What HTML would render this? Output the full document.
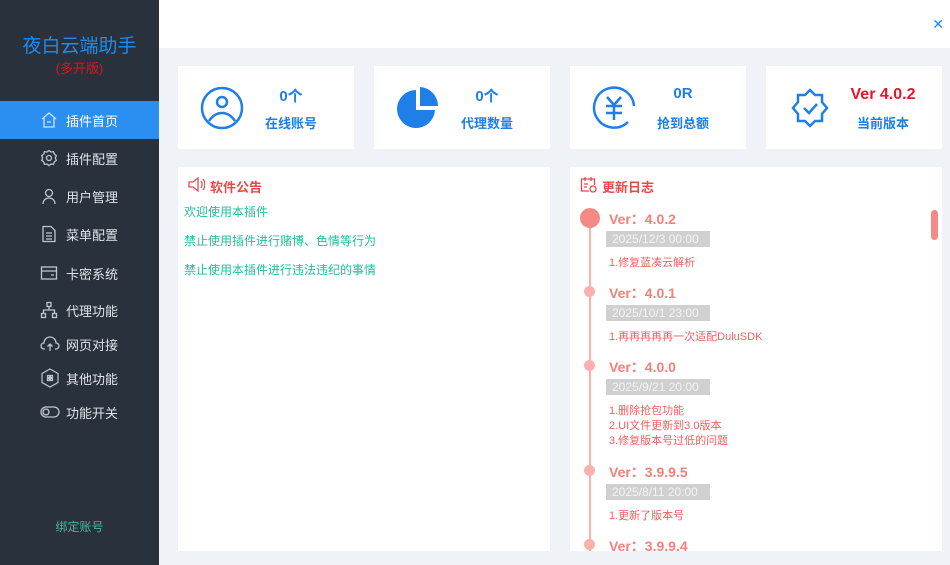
<!DOCTYPE html>
<html><head><meta charset="utf-8"><style>
*{margin:0;padding:0;box-sizing:border-box}
body{width:950px;height:565px;overflow:hidden;background:#eff2f7;font-family:"Liberation Sans","Noto Sans CJK SC",sans-serif;position:relative}
.side{position:absolute;left:0;top:0;width:159px;height:565px;background:#29313c}
.title{position:absolute;top:31px;width:159px;text-align:center;color:#1e8cf0;font-size:19px}
.sub{position:absolute;top:58px;width:159px;text-align:center;color:#e0141e;font-size:13px}
.item{position:absolute;left:0;width:159px;height:38px;display:flex;align-items:center;color:#dfe3e8;font-size:13px}
.item svg{position:absolute;left:40px}
.item span{position:absolute;left:66px}
.item.act{background:#2a8ff0;color:#fff}
.bind{position:absolute;top:518px;width:159px;text-align:center;color:#4fb0a0;font-size:12px}
.head{position:absolute;left:159px;top:0;right:0;height:48px;background:#fff}
.x{position:absolute;right:6px;top:16px;color:#1e8cf0;font-size:14px}
.card{position:absolute;top:66px;width:176px;height:83px;background:#fff}
.card svg{position:absolute;left:22px;top:20px}
.num{position:absolute;left:80px;width:66px;top:19px;text-align:center;color:#1e7fe8;font-weight:bold;font-size:15px}
.lab{position:absolute;left:80px;width:66px;top:47px;text-align:center;color:#1e7fe8;font-weight:bold;font-size:13px}
.panel{position:absolute;top:167px;width:372px;height:384px;background:#fff;overflow:hidden}
.ph{position:absolute;left:32px;top:10px;color:#e84a4a;font-size:13px;font-weight:bold}
.notice{position:absolute;left:6px;color:#1fbfa0;font-size:12px}
.ver{position:absolute;left:39px;color:#f5807a;font-weight:bold;font-size:14px}
.date{position:absolute;left:36px;background:#d0d0d0;color:#f4f4f4;font-size:12px;padding:1px 6px;width:104px}
.log{position:absolute;left:39px;color:#f06060;font-size:11px;line-height:15px}
.dot{position:absolute;left:14px;width:11px;height:11px;border-radius:50%;background:#fbb0ad}
</style></head><body>
<div class="side">
<div class="title">夜白云端助手</div>
<div class="sub">(多开版)</div>
<div class="item act" style="top:101px"><svg width="18" height="18" viewBox="0 0 18 18" fill="none" stroke="#cfe3fa" stroke-width="1.3"><path d="M2 8L9 2l7 6M4 7v9h10V7M7 11h4"/></svg><span>插件首页</span></div>
<div class="item" style="top:139px"><svg width="18" height="18" viewBox="0 0 18 18" fill="none" stroke="#bfc5cc" stroke-width="1.3"><path d="M9 1.5l2 1.5 2.5-.3.8 2.4 2 1.5-1 2.4 1 2.4-2 1.5-.8 2.4L11 15 9 16.5 7 15l-2.5.3-.8-2.4-2-1.5 1-2.4-1-2.4 2-1.5.8-2.4L7 3z"/><circle cx="9" cy="9" r="2.5"/></svg><span>插件配置</span></div>
<div class="item" style="top:177px"><svg width="18" height="18" viewBox="0 0 18 18" fill="none" stroke="#bfc5cc" stroke-width="1.3"><circle cx="9" cy="6" r="3.5"/><path d="M3 17c0-4 3-6 6-6s6 2 6 6"/></svg><span>用户管理</span></div>
<div class="item" style="top:215px"><svg width="18" height="18" viewBox="0 0 18 18" fill="none" stroke="#bfc5cc" stroke-width="1.3"><path d="M3 1.5h8l4 4v11H3zM6 8h6M6 11h6M6 14h6"/></svg><span>菜单配置</span></div>
<div class="item" style="top:254px"><svg width="18" height="18" viewBox="0 0 18 18" fill="none" stroke="#bfc5cc" stroke-width="1.3"><rect x="1.5" y="3" width="15" height="12"/><path d="M1.5 7h15M11 11h3"/></svg><span>卡密系统</span></div>
<div class="item" style="top:291px"><svg width="18" height="18" viewBox="0 0 18 18" fill="none" stroke="#bfc5cc" stroke-width="1.3"><rect x="7" y="1.5" width="4" height="4"/><rect x="1.5" y="12.5" width="4" height="4"/><rect x="12.5" y="12.5" width="4" height="4"/><path d="M9 5.5v3.5M3.5 12.5V9h11v3.5"/></svg><span>代理功能</span></div>
<div class="item" style="top:325px"><svg width="20" height="18" viewBox="0 0 20 18" fill="none" stroke="#bfc5cc" stroke-width="1.3"><path d="M5 14H4a3 3 0 010-6 6 6 0 0112 0 3 3 0 010 6h-1M10 16V9M7.5 11.5L10 9l2.5 2.5"/></svg><span>网页对接</span></div>
<div class="item" style="top:359px"><svg width="20" height="20" viewBox="0 0 20 20" fill="none" stroke="#bfc5cc" stroke-width="1.2"><path d="M10 1l8 4.5v9L10 19l-8-4.5v-9z"/><path d="M7.5 7.5h2v2h-2zM10.5 7.5h2v2h-2zM7.5 10.5h2v2h-2zM10.5 10.5h2v2h-2z"/></svg><span>其他功能</span></div>
<div class="item" style="top:393px"><svg width="20" height="14" viewBox="0 0 20 14" fill="none" stroke="#bfc5cc" stroke-width="1.3"><rect x="1" y="2" width="18" height="10" rx="5"/><circle cx="6" cy="7" r="3"/></svg><span>功能开关</span></div>
<div class="bind">绑定账号</div>
</div>
<div class="head"><div class="x">✕</div></div>

<div class="card" style="left:178px"><svg width="44" height="44" viewBox="0 0 44 44" fill="none" stroke="#1e7fe8" stroke-width="2.5"><circle cx="22" cy="22" r="20"/><circle cx="22" cy="16" r="5"/><path d="M9 35c4-6 8-8 13-8s9 2 13 8"/></svg><div class="num">0个</div><div class="lab">在线账号</div></div>
<div class="card" style="left:374px"><svg width="44" height="44" viewBox="0 0 44 44"><path d="M20 4A19 19 0 1039 24H20z" fill="#1e7fe8"/><path d="M24 1a19 19 0 0118 19H24z" fill="#1e7fe8"/></svg><div class="num">0个</div><div class="lab">代理数量</div></div>
<div class="card" style="left:570px"><svg width="44" height="44" viewBox="0 0 44 44" fill="none" stroke="#1e7fe8" stroke-width="2.5"><path d="M36 36A20 20 0 1142 20"/><path d="M15 11l7 8 7-8M14 20h16M14 27h16M22 19v15"/></svg><div class="num">0R</div><div class="lab">抢到总额</div></div>
<div class="card" style="left:766px"><svg width="44" height="44" viewBox="0 0 44 44" fill="none" stroke="#1e7fe8" stroke-width="2.5"><path d="M22 4l5 5h7v7l5 6-5 6v7h-7l-5 5-5-5h-7v-7l-5-6 5-6V9h7z"/><path d="M16 22l5 5 8-9"/></svg><div class="num" style="color:#e8142a;top:20px;left:72px;width:90px;font-size:16px">Ver 4.0.2</div><div class="lab" style="left:72px;width:90px">当前版本</div></div>

<div class="panel" style="left:178px">
<svg style="position:absolute;left:10px;top:10px" width="17" height="15" viewBox="0 0 17 15" fill="none" stroke="#e84a4a" stroke-width="1.3"><path d="M1 5h4l5-4v13l-5-4H1zM13 4c1.5 2 1.5 5 0 7M15 2c2.5 3 2.5 8 0 11"/></svg>
<div class="ph">软件公告</div>
<div class="notice" style="top:36px">欢迎使用本插件</div>
<div class="notice" style="top:65px">禁止使用插件进行赌博、色情等行为</div>
<div class="notice" style="top:94px">禁止使用本插件进行违法违纪的事情</div>
</div>

<div class="panel" style="left:570px">
<svg style="position:absolute;left:10px;top:9px" width="17" height="17" viewBox="0 0 17 17" fill="none" stroke="#e84a4a" stroke-width="1.3"><path d="M9 15H1.5V3h13v6M5 1v4M11 1v4M4 8h4M4 11h3"/><circle cx="13" cy="13" r="3"/></svg>
<div class="ph">更新日志</div>
<div style="position:absolute;left:19px;top:50px;width:2px;height:340px;background:#fbb0ad"></div>
<div style="position:absolute;left:10px;top:41px;width:20px;height:20px;border-radius:50%;background:#f58a85"></div>
<div class="dot" style="top:119px"></div><div class="dot" style="top:193px"></div><div class="dot" style="top:298px"></div><div class="dot" style="top:372px"></div>
<div style="position:absolute;left:361px;top:43px;width:7px;height:30px;border-radius:4px;background:#f58a85"></div>
<div class="ver" style="top:42px">Ver：4.0.2</div><div class="date" style="top:64px">2025/12/3 00:00</div><div class="log" style="top:89px">1.修复蓝凑云解析</div>
<div class="ver" style="top:116px">Ver：4.0.1</div><div class="date" style="top:138px">2025/10/1 23:00</div><div class="log" style="top:163px">1.再再再再再一次适配DuluSDK</div>
<div class="ver" style="top:190px">Ver：4.0.0</div><div class="date" style="top:212px">2025/9/21 20:00</div><div class="log" style="top:237px">1.删除抢包功能<br>2.UI文件更新到3.0版本<br>3.修复版本号过低的问题</div>
<div class="ver" style="top:295px">Ver：3.9.9.5</div><div class="date" style="top:317px">2025/8/11 20:00</div><div class="log" style="top:342px">1.更新了版本号</div>
<div class="ver" style="top:369px">Ver：3.9.9.4</div>
</div>
</body></html>
